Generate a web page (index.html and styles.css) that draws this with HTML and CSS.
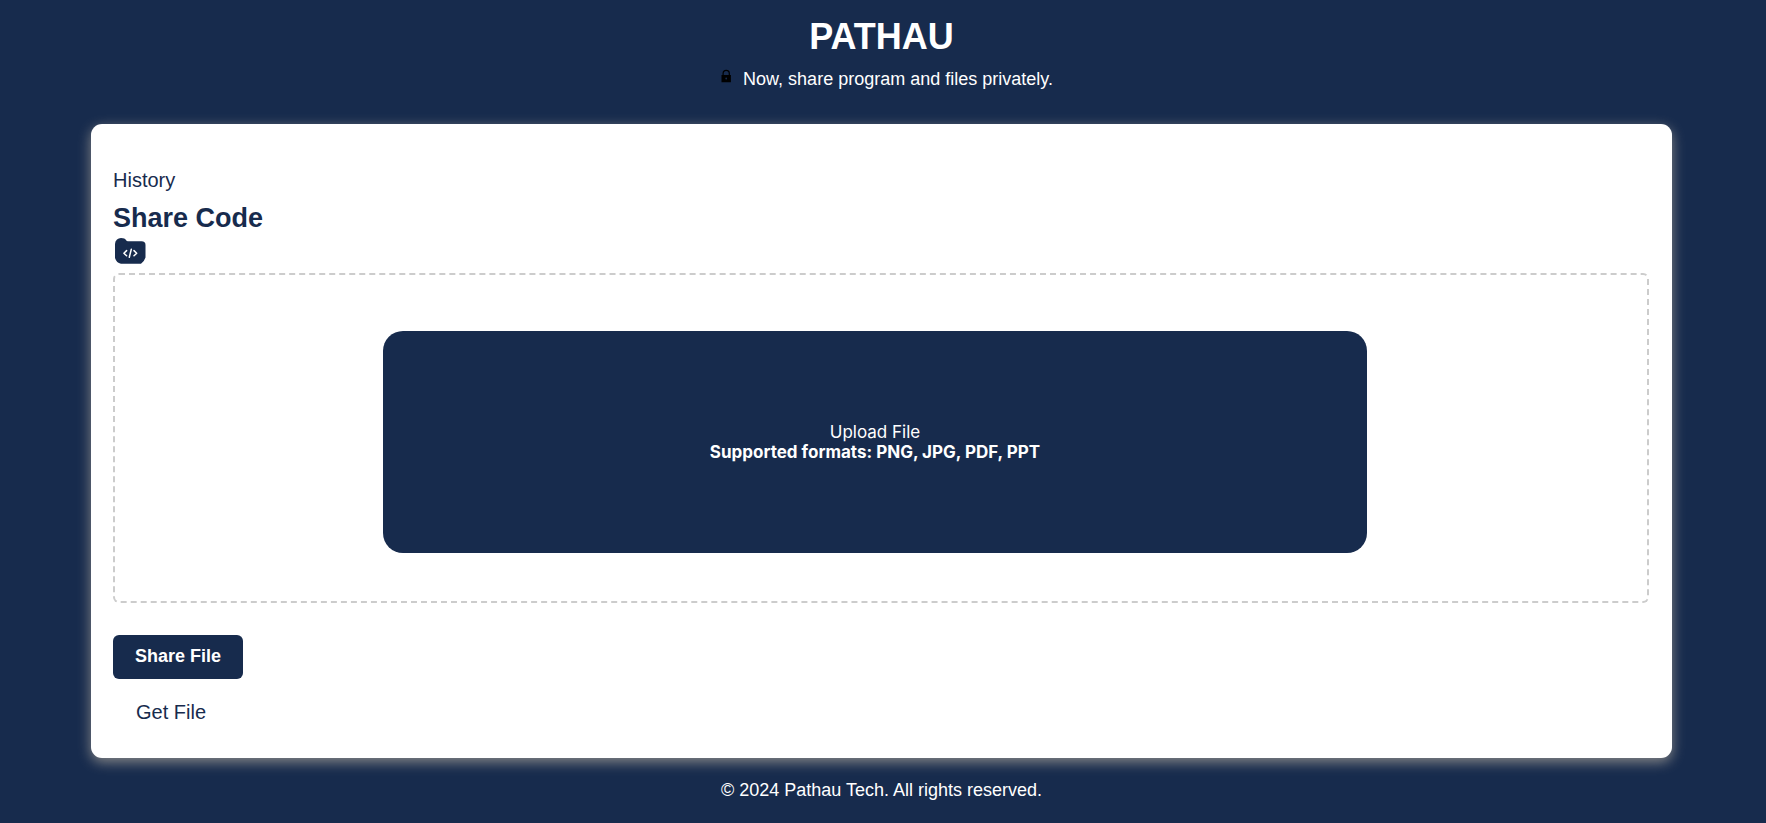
FILE: index.html
```html
<!DOCTYPE html>
<html lang="en">
<head>
<meta charset="utf-8">
<title>Pathau</title>
<link rel="stylesheet" href="styles.css">
</head>
<body>
<header class="header">
  <h1 class="brand">PATHAU</h1>
  <p class="tagline">
    <svg class="lock" viewBox="0 0 16 16" aria-hidden="true"><path fill-rule="evenodd" d="M4.500 7V5.500a3.700 3.700 0 0 1 7.400 0V7h1v7.200h-9.400V7zM5.700 7h5V5.500a2.500 2.500 0 0 0-5 0zM8.200 9.600a.9.900 0 1 0 0 1.800.9.900 0 0 0 0-1.800z"/></svg>
    <span>Now, share program and files privately.</span>
  </p>
</header>
<main class="card">
  <a class="link" href="#history">History</a>
  <h2 class="title">Share Code</h2>
  <svg class="folder" viewBox="0 0 34 28" aria-hidden="true">
    <path fill="#172b4d" d="M2 6Q2 3 4 1.500 5.500 0 8 0q4 0 5 2 .5 1.300 2 1.300h13.500Q32.500 3.300 32.500 7v12.500Q31 24 28 25.700H8Q3.500 25 2 20z"/>
    <path fill="none" stroke="#fff" stroke-width="1.500" stroke-linecap="round" stroke-linejoin="round" d="M13.600 12.600l-2.700 2.600 2.700 2.600M21 12.600l2.700 2.600-2.700 2.600M18.300 11.200l-2 8"/>
  </svg>
  <section class="dropzone">
    <button class="upload" type="button">
      <span>Upload File</span>
      <strong>Supported formats: PNG, JPG, PDF, PPT</strong>
    </button>
  </section>
  <button class="share" type="button">Share File</button>
  <a class="link get" href="#get">Get File</a>
</main>
<footer class="footer">© 2024 Pathau Tech. All rights reserved.</footer>
</body>
</html>
```
FILE: styles.css
```css
* {
  box-sizing: border-box;
}

body {
  margin: 0;
  padding: 0 94px 0 91px;
  background: #172b4d;
  color: #fff;
  font-family: "Liberation Sans", Arial, sans-serif;
  font-size: 18px;
  line-height: 22px;
}

.header {
  padding: 17px 0 34px;
  text-align: center;
}

.brand {
  margin: 0 0 11px;
  font-size: 36px;
  line-height: 40px;
}

.tagline {
  display: flex;
  justify-content: center;
  gap: 9px;
  margin: 0;
  padding-left: 8px;
}

.lock {
  width: 16px;
  height: 16px;
  fill: #000;
}

.card {
  display: flex;
  flex-direction: column;
  align-items: flex-start;
  padding: 44px 23px 34px 22px;
  border-radius: 11px;
  background: #fff;
  color: #172b4d;
  box-shadow: 0 4px 13px #888;
}

.link {
  color: #172b4d;
  font-size: 20px;
  line-height: 24px;
  text-decoration: none;
}

.title {
  margin: 11px 0 5px;
  font-size: 27px;
  line-height: 30px;
}

.folder {
  width: 34px;
  height: 28px;
  margin-bottom: 7px;
}

.dropzone {
  align-self: stretch;
  padding: 56px 280px 48px 268px;
  border: 2px dashed #ccc;
  border-radius: 6px;
}

.upload {
  display: flex;
  flex-direction: column;
  align-items: center;
  justify-content: center;
  width: 100%;
  min-height: 222px;
  padding: 0;
  border: 0;
  border-radius: 20px;
  background: #172b4d;
  color: #fff;
  font-family: Inter, sans-serif;
  font-size: 17px;
  line-height: 20px;
}

.share {
  margin: 32px 0 21px;
  padding: 10px 22px 12px;
  border: 0;
  border-radius: 6px;
  background: #172b4d;
  color: #fff;
  font: bold 18px/22px "Liberation Sans", Arial, sans-serif;
}

.get {
  padding-left: 23px;
}

.footer {
  padding: 21px 0;
  text-align: center;
}
```
